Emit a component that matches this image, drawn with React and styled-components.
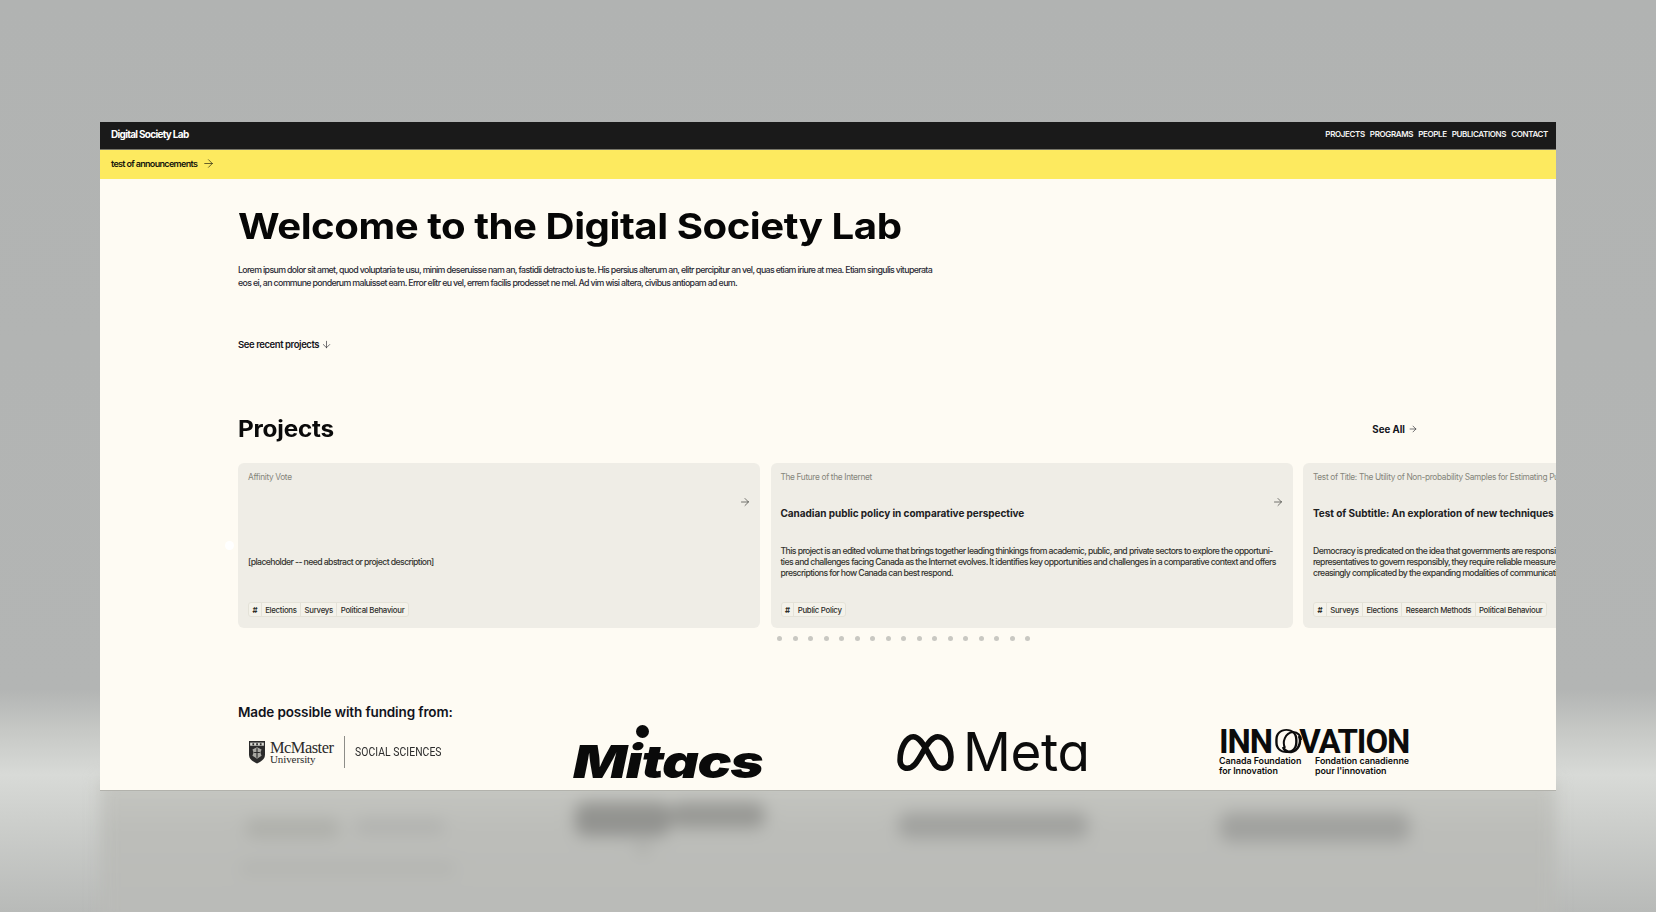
import React from 'react';
import styled, { createGlobalStyle } from 'styled-components';
import { ArrowRight, ArrowDown } from 'lucide-react';

const GlobalStyle = createGlobalStyle`
  html, body {
    margin: 0;
    padding: 0;
    height: 100%;
    overflow: hidden;
  }
  body {
    font-family: Inter, "Liberation Sans", sans-serif;
    color: #111;
  }
`;

const Stage = styled.div`
  position: relative;
  width: 1656px;
  height: 912px;
  padding: 122px 100px 0;
  box-sizing: border-box;
  overflow: hidden;
  background: linear-gradient(
    180deg,
    #b1b3b2 0,
    #b3b5b4 690px,
    #c6c8c5 730px,
    #d8dad7 775px,
    #cdcfcc 820px,
    #b8bab8 912px
  );
`;

const Reflection = styled.div`
  position: absolute;
  left: 100px;
  top: 780px;
  width: 1456px;
  height: 150px;
  background: linear-gradient(180deg, #c5c6c1 0, #bcbdb9 50px, #b9bab7 150px);
  filter: blur(8px);
`;

const Smudge = styled.div`
  position: absolute;
  left: ${p => p.$x}px;
  top: ${p => p.$y}px;
  width: ${p => p.$w}px;
  height: ${p => p.$h}px;
  background: rgba(90, 90, 88, ${p => p.$a});
  border-radius: 10px;
`;

const Window = styled.div`
  position: relative;
  width: 1456px;
  height: 669px;
  overflow: hidden;
  background: #fefbf3;
  border-bottom: 1px solid #b2b2ac;
  box-sizing: border-box;
`;

const NavBar = styled.header`
  display: flex;
  align-items: center;
  justify-content: space-between;
  height: 24px;
  padding: 0 8px 3px 11px;
  background: #1a1a1a;
  border-bottom: 1px solid #77766a;
  box-sizing: content-box;
`;

const Brand = styled.div`
  color: #fff;
  font-size: 10px;
  font-weight: 700;
  letter-spacing: -0.7px;
`;

const NavLinks = styled.nav`
  display: flex;
  gap: 5px;
`;

const NavLink = styled.a`
  color: #f4f4f4;
  font-size: 8px;
  font-weight: 600;
  letter-spacing: -0.36px;
`;

const Announcement = styled.div`
  display: flex;
  align-items: center;
  gap: 5px;
  height: 27px;
  padding: 0 0 2px 11px;
  background: #fdea5f;
  font-size: 9px;
  font-weight: 600;
  letter-spacing: -0.67px;
  color: #16160c;
`;

const Content = styled.main`
  padding: 25px 0 0 138px;
`;

const Title = styled.h1`
  margin: 0;
  font-size: 36px;
  line-height: 44px;
  font-weight: 700;
  letter-spacing: -0.42px;
  color: #060606;
  transform: scaleX(1.116);
  transform-origin: left center;
`;

const Intro = styled.p`
  width: 706px;
  margin: 16px 0 0;
  font-size: 8.8px;
  line-height: 12.5px;
  font-weight: 450;
  letter-spacing: -0.635px;
  color: #2a2a35;
`;

const JumpLink = styled.a`
  display: flex;
  align-items: center;
  gap: 2px;
  margin-top: 50px;
  font-size: 9.5px;
  font-weight: 600;
  letter-spacing: -0.42px;
  color: #15151c;
`;

const SectionHead = styled.div`
  display: flex;
  align-items: center;
  justify-content: space-between;
  width: 1180px;
  margin-top: 64px;
`;

const SectionTitle = styled.h2`
  margin: 0;
  font-size: 22.5px;
  line-height: 30px;
  font-weight: 700;
  letter-spacing: -0.2px;
  color: #0a0a0a;
  transform: scaleX(1.08);
  transform-origin: left center;
`;

const SeeAll = styled.a`
  display: flex;
  align-items: center;
  gap: 3px;
  font-size: 9.7px;
  font-weight: 700;
  color: #14141c;
`;

const Carousel = styled.div`
  position: relative;
  margin-top: 19px;
`;

const CardTrack = styled.div`
  display: flex;
  gap: 10.5px;
  width: 1700px;
`;

const PrevDot = styled.span`
  position: absolute;
  left: -13px;
  top: 78px;
  width: 9px;
  height: 9px;
  border-radius: 50%;
  background: #ffffff;
`;

const Card = styled.article`
  position: relative;
  flex: 0 0 522px;
  height: 165px;
  padding: 9px 10px 0;
  box-sizing: border-box;
  background: #efede6;
  border-radius: 6px;
  overflow: hidden;
  display: flex;
  flex-direction: column;
`;

const CardKicker = styled.div`
  font-size: 8.3px;
  line-height: 11px;
  letter-spacing: -0.34px;
  color: #85857b;
  white-space: nowrap;
`;

const CardArrow = styled(ArrowRight)`
  position: absolute;
  right: 9px;
  top: 33px;
  color: #2f2f2c;
`;

const CardSubtitle = styled.h3`
  margin: 22px 0 0;
  height: 16px;
  font-size: 10px;
  line-height: 16px;
  font-weight: 700;
  letter-spacing: -0.05px;
  color: #20201e;
  white-space: nowrap;
`;

const CardBody = styled.p`
  margin: 0;
  flex: 1;
  display: flex;
  align-items: center;
  padding-top: 1px;
  font-size: 8.7px;
  line-height: 11px;
  font-weight: 450;
  letter-spacing: -0.59px;
  color: #34342f;
  white-space: pre;
`;

const TagRow = styled.div`
  display: inline-flex;
  align-self: flex-start;
  height: 15px;
  margin-bottom: 11px;
  border: 1px solid #e4e2d8;
  border-radius: 3px;
  background: #f4f2ea;
  box-sizing: border-box;
`;

const Tag = styled.span`
  display: flex;
  align-items: center;
  padding: 0 ${p => (p.$hash ? 3.5 : 3.4)}px;
  font-size: 7.8px;
  font-weight: ${p => (p.$hash ? 700 : 450)};
  letter-spacing: -0.27px;
  color: #2d2d29;
  white-space: nowrap;
  & + & {
    border-left: 1px solid #e4e2d8;
  }
`;

const Dots = styled.div`
  display: flex;
  gap: 10.5px;
  margin: 8px 0 0 539px;
`;

const Dot = styled.span`
  width: 5px;
  height: 5px;
  border-radius: 50%;
  background: #c9c8c2;
`;

const FundingLabel = styled.h4`
  margin: 62px 0 0;
  font-size: 13.5px;
  line-height: 18px;
  font-weight: 600;
  letter-spacing: -0.12px;
  color: #11131c;
`;

const LogoRow = styled.div`
  display: flex;
  align-items: flex-start;
  width: 1190px;
  height: 70px;
`;

const McMasterLogo = styled.div`
  display: flex;
  align-items: center;
  width: 335px;
  margin-top: 15px;
  padding-left: 11px;
  box-sizing: border-box;
`;

const McMasterWords = styled.div`
  margin-left: 5px;
  font-family: "Liberation Serif", serif;
  color: #2a2a2a;
`;

const McMasterName = styled.div`
  font-size: 16.4px;
  line-height: 13px;
  letter-spacing: -0.5px;
`;

const McMasterUni = styled.div`
  font-size: 11px;
  line-height: 10px;
  letter-spacing: -0.1px;
`;

const LogoDivider = styled.span`
  width: 1px;
  height: 32px;
  margin: 0 10.5px;
  background: #8d8d88;
`;

const SocialSciences = styled.span`
  font-family: Roboto, sans-serif;
  font-size: 12px;
  letter-spacing: 0.1px;
  transform: scaleX(0.86);
  transform-origin: left center;
  color: #2b2b2b;
  white-space: nowrap;
`;

const MitacsLogo = styled.div`
  position: relative;
  width: 323px;
  height: 70px;
  font-size: 46px;
  line-height: 46px;
  font-weight: 900;
  font-style: italic;
  letter-spacing: -1px;
  color: #0a0a0a;
  padding-top: 17px;
  box-sizing: border-box;
`;

const MitacsWord = styled.span`
  display: inline-block;
  transform: scaleX(1.23);
  transform-origin: left center;
`;

const MitacsDot = styled.span`
  position: absolute;
  left: 63px;
  top: 4px;
  width: 13px;
  height: 13px;
  border-radius: 50%;
  background: #0a0a0a;
`;

const MetaLogo = styled.div`
  display: flex;
  align-items: center;
  gap: 9px;
  width: 323px;
  height: 50px;
  margin-top: 6px;
`;

const MetaWord = styled.span`
  font-size: 53px;
  line-height: 50px;
  font-weight: 400;
  letter-spacing: -0.4px;
  font-feature-settings: 'cv11';
  color: #0c0c0c;
`;

const InnovationLogo = styled.div`
  color: #0b0b0b;
  margin-top: 7px;
`;

const InnovationWord = styled.div`
  position: relative;
  font-family: Roboto, sans-serif;
  font-size: 33px;
  line-height: 28px;
  font-weight: 700;
  letter-spacing: -1.1px;
  white-space: nowrap;
`;

const InnovationO = styled.span`
  display: inline-block;
  margin: 0 3px;
  font-weight: 300;
  transform: scaleX(1.22);
`;

const Swirl = styled.svg`
  position: absolute;
  left: 60px;
  top: 0;
`;

const InnovationSub = styled.div`
  display: grid;
  grid-template-columns: 96px auto;
  margin-top: 0;
  font-size: 8.9px;
  line-height: 9.5px;
  font-weight: 600;
  letter-spacing: -0.05px;
`;

const projects = [
  {
    kicker: 'Affinity Vote',
    body: '[placeholder -- need abstract or project description]',
    tags: ['Elections', 'Surveys', 'Political Behaviour'],
  },
  {
    kicker: 'The Future of the Internet',
    subtitle: 'Canadian public policy in comparative perspective',
    body: 'This project is an edited volume that brings together leading thinkings from academic, public, and private sectors to explore the opportuni-\nties and challenges facing Canada as the Internet evolves. It identifies key opportunities and challenges in a comparative context and offers\nprescriptions for how Canada can best respond.',
    tags: ['Public Policy'],
  },
  {
    kicker: 'Test of Title: The Utility of Non-probability Samples for Estimating Public Opinion',
    subtitle: 'Test of Subtitle: An exploration of new techniques in survey research',
    body: 'Democracy is predicated on the idea that governments are responsive to their citizens. For citizens to hold\nrepresentatives to govern responsibly, they require reliable measures of public opinion, a task that has become in-\ncreasingly complicated by the expanding modalities of communication and survey response.',
    tags: ['Surveys', 'Elections', 'Research Methods', 'Political Behaviour'],
  },
];

const navItems = ['PROJECTS', 'PROGRAMS', 'PEOPLE', 'PUBLICATIONS', 'CONTACT'];

const smudges = [
  { x: 145, y: 38, w: 95, h: 20, a: 0.14 },
  { x: 255, y: 38, w: 90, h: 16, a: 0.1 },
  { x: 475, y: 22, w: 95, h: 34, a: 0.44 },
  { x: 570, y: 22, w: 95, h: 26, a: 0.38 },
  { x: 535, y: 62, w: 16, h: 12, a: 0.14 },
  { x: 798, y: 32, w: 190, h: 26, a: 0.28 },
  { x: 1120, y: 32, w: 190, h: 30, a: 0.28 },
  { x: 140, y: 82, w: 215, h: 12, a: 0.08 },
];

function Shield() {
  return (
    <svg width="16" height="24" viewBox="0 0 14 23" preserveAspectRatio="none">
      <path d="M0 1h14v13c0 4.500-3.500 7-7 8.500C3.500 21 0 18.500 0 14z" fill="#2b2b2b" />
      <path d="M1 2.500h12v3H1z" fill="#d9d9d3" />
      <path d="M3 3h1.500v2H3zM6.300 3h1.500v2H6.300zM9.500 3H11v2H9.500z" fill="#2b2b2b" />
      <path d="M3 9l4-2 4 2-1 3 1 3-4 3-4-3 1-3z" fill="#a9a9a4" />
      <path d="M7 8v9M4.500 12h5" stroke="#2b2b2b" strokeWidth="1" />
    </svg>
  );
}

function MetaMark() {
  return (
    <svg width="58" height="40" viewBox="0 0 57 38" fill="none">
      <path
        d="M4 27c0-12 6-23 13-23 5 0 9 6 13 13l8 14c2 3 5 4 8 4 5 0 8-4 8-11 0-12-6-20-13-20-5 0-9 5-14 14-6 11-10 17-16 17-4 0-7-3-7-8z"
        stroke="#0c0c0c"
        strokeWidth="5.500"
        strokeLinejoin="round"
      />
    </svg>
  );
}

function Funding() {
  return (
    <LogoRow>
      <McMasterLogo>
        <Shield />
        <McMasterWords>
          <McMasterName>McMaster</McMasterName>
          <McMasterUni>University</McMasterUni>
        </McMasterWords>
        <LogoDivider />
        <SocialSciences>SOCIAL SCIENCES</SocialSciences>
      </McMasterLogo>
      <MitacsLogo>
        <MitacsDot />
        <MitacsWord>Mitacs</MitacsWord>
      </MitacsLogo>
      <MetaLogo>
        <MetaMark />
        <MetaWord>Meta</MetaWord>
      </MetaLogo>
      <InnovationLogo>
        <InnovationWord>
          INN<InnovationO>O</InnovationO>VATION
          <Swirl width="26" height="28" viewBox="0 0 24 28" fill="none">
            <path d="M5 20c-3-6 0-15 8-16 5 0 8 4 8 8" stroke="#0b0b0b" strokeWidth="2" />
            <path d="M19 8c3 7-1 15-8 16-4 0-7-2-8-5" stroke="#0b0b0b" strokeWidth="2.500" />
          </Swirl>
        </InnovationWord>
        <InnovationSub>
          <div>Canada Foundation<br />for Innovation</div>
          <div>Fondation canadienne<br />pour l'innovation</div>
        </InnovationSub>
      </InnovationLogo>
    </LogoRow>
  );
}

export default function App() {
  return (
    <Stage>
      <GlobalStyle />
      <Reflection>
        {smudges.map((s, i) => (
          <Smudge key={i} $x={s.x} $y={s.y} $w={s.w} $h={s.h} $a={s.a} />
        ))}
      </Reflection>
      <Window>
        <NavBar>
          <Brand>Digital Society Lab</Brand>
          <NavLinks>
            {navItems.map(item => (
              <NavLink key={item}>{item}</NavLink>
            ))}
          </NavLinks>
        </NavBar>
        <Announcement>
          test of announcements
          <ArrowRight size={13} strokeWidth={1.2} />
        </Announcement>
        <Content>
          <Title>Welcome to the Digital Society Lab</Title>
          <Intro>
            Lorem ipsum dolor sit amet, quod voluptaria te usu, minim deseruisse nam an, fastidii detracto ius te. His persius alterum an, elitr percipitur an vel, quas etiam iriure at mea. Etiam singulis vituperata eos ei, an commune ponderum maluisset eam. Error elitr eu vel, errem facilis prodesset ne mel. Ad vim wisi altera, civibus antiopam ad eum.
          </Intro>
          <JumpLink>
            See recent projects
            <ArrowDown size={11} strokeWidth={1.3} />
          </JumpLink>
          <SectionHead>
            <SectionTitle>Projects</SectionTitle>
            <SeeAll>
              See All
              <ArrowRight size={10} strokeWidth={1.4} />
            </SeeAll>
          </SectionHead>
          <Carousel>
            <PrevDot />
            <CardTrack>
              {projects.map(p => (
                <Card key={p.kicker}>
                  <CardKicker>{p.kicker}</CardKicker>
                  <CardArrow size={12} strokeWidth={1.3} />
                  <CardSubtitle>{p.subtitle}</CardSubtitle>
                  <CardBody>{p.body}</CardBody>
                  <TagRow>
                    <Tag $hash>#</Tag>
                    {p.tags.map(t => (
                      <Tag key={t}>{t}</Tag>
                    ))}
                  </TagRow>
                </Card>
              ))}
            </CardTrack>
            <Dots>
              {Array.from({ length: 17 }, (_, i) => (
                <Dot key={i} />
              ))}
            </Dots>
          </Carousel>
          <FundingLabel>Made possible with funding from:</FundingLabel>
          <Funding />
        </Content>
      </Window>
    </Stage>
  );
}
